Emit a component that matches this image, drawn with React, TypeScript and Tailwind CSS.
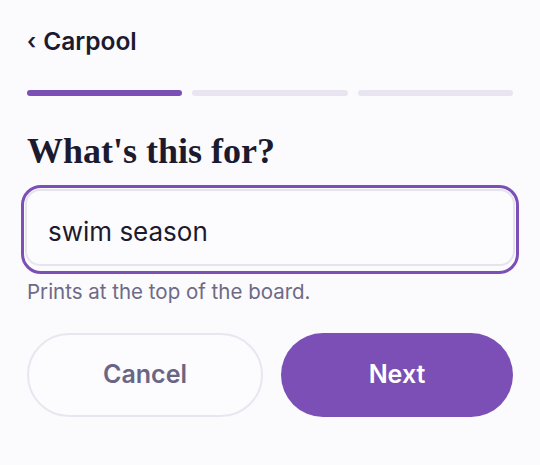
import React from "react";

export default function App() {
  return (
    <div className="min-h-[465px] w-[540px] bg-[#fbfafd] px-[27px] pt-[25px] text-[#1b1a2e]" style={{ fontFamily: "Inter, 'Noto Sans', sans-serif" }}>
      <div className="flex h-[32px] items-center gap-[7px] text-[24.5px] font-semibold leading-[32px]">
        <span className="text-[22px]">‹</span>
        <span>Carpool</span>
      </div>
      <div className="mt-[33px] flex gap-[10px]">
        <div className="h-[6px] flex-1 rounded-full bg-[#7b4fb5]" />
        <div className="h-[6px] flex-1 rounded-full bg-[#e8e5f0]" />
        <div className="h-[6px] flex-1 rounded-full bg-[#e8e5f0]" />
      </div>
      <h1 className="mt-[33px] h-[44px] text-[36px] font-bold leading-[44px] text-[#1b1a2e]" style={{ fontFamily: "'Liberation Serif', 'DejaVu Serif', serif" }}>
        What's this for?
      </h1>
      <div className="-mx-[6px] mt-[12px] rounded-[20px] border-[3px] border-[#7b4fb5] px-[1px] pb-[5px] pt-[1px]">
        <div className="flex h-[77px] items-center rounded-[15px] border-2 border-[#e6e3ef] bg-[#fcfbfe] px-[21px] pt-[8px] text-[26px]">
          swim season
        </div>
      </div>
      <div className="mt-[6px] h-[24px] text-[20.5px] leading-[24px] text-[#6e6a86]">Prints at the top of the board.</div>
      <div className="mt-[29px] flex gap-[18px]">
        <button className="flex h-[84px] flex-1 items-center justify-center rounded-full border-2 border-[#e9e6f1] bg-[#fcfbfe] text-[25px] font-semibold text-[#6b6585]">
          Cancel
        </button>
        <button className="flex h-[84px] flex-1 items-center justify-center rounded-full bg-[#7b4fb5] text-[25px] font-semibold text-white">
          Next
        </button>
      </div>
    </div>
  );
}
